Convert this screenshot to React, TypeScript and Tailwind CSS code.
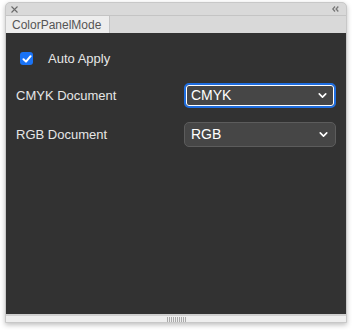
import { ChevronDown } from "lucide-react";

function Select({ value, focused }: { value: string; focused?: boolean }) {
  return (
    <div
      className={
        "flex items-center justify-between w-[152px] h-[25px] rounded-[5px] bg-[#464646] pl-[5px] pr-[5px] " +
        (focused
          ? "border-[2px] border-[#1f6ee0] ring-1 ring-inset ring-white"
          : "border border-[#5c5c5c] pl-[6px]")
      }
    >
      <span className="text-[14px] text-white">{value}</span>
      <ChevronDown size={13} strokeWidth={3} className="text-white" />
    </div>
  );
}

export default function App() {
  return (
    <div
      className="w-[352px] h-[330px] bg-white pt-[2px] px-[5px]"
      style={{ fontFamily: '"Liberation Sans", Arial, sans-serif' }}
    >
      <div className="flex flex-col h-[321px] rounded-t-[5px] border border-[#c8c8c8] bg-[#d9d9d9] shadow-[0_2px_5px_rgba(0,0,0,0.25)] overflow-hidden">
        <div className="flex items-center justify-between h-[12px] pl-[5px] pr-[7px]">
          <svg width="7" height="7" viewBox="0 0 7 7">
            <path d="M0.5 0.5 L6.5 6.5 M6.5 0.5 L0.5 6.5" stroke="#6a6a6a" strokeWidth="1.1" />
          </svg>
          <svg width="7" height="6" viewBox="0 0 7 6">
            <path d="M3 0.5 L0.8 3 L3 5.5 M6.3 0.5 L4.1 3 L6.3 5.5" fill="none" stroke="#777" strokeWidth="1.3" />
          </svg>
        </div>
        <div className="flex h-[18px] border-t border-[#c4c4c4]">
          <div className="flex items-center w-[104px] bg-[#ededed] border-r border-[#c4c4c4] px-[6px] text-[12px] text-[#555]">
            ColorPanelMode
          </div>
        </div>
        <div className="flex-1 bg-[#323232] px-[10px] pt-[19px] text-[13px] text-[#e6e6e6]">
          <div className="flex items-center gap-[15px] pl-[4px] h-[13px]">
            <div className="flex items-center justify-center w-[13px] h-[13px] rounded-[3px] bg-[#1a73f5]">
              <svg width="10" height="10" viewBox="0 0 10 10">
                <path d="M1.5 5.2 L4 7.6 L8.6 2.2" fill="none" stroke="white" strokeWidth="2" strokeLinecap="round" strokeLinejoin="round" />
              </svg>
            </div>
            <span>Auto Apply</span>
          </div>
          <div className="flex items-center justify-between mt-[18px]">
            <span>CMYK Document</span>
            <Select value="CMYK" focused />
          </div>
          <div className="flex items-center justify-between mt-[14px]">
            <span>RGB Document</span>
            <Select value="RGB" />
          </div>
        </div>
        <div className="flex items-center justify-center h-[8px] border-t-2 border-[#d0d0d0] bg-[#eeeeee]">
          <div className="flex gap-[1px]">
            {Array.from({ length: 10 }).map((_, i) => (
              <div key={i} className="w-[1px] h-[5px] bg-[#aaa]" />
            ))}
          </div>
        </div>
      </div>
    </div>
  );
}
